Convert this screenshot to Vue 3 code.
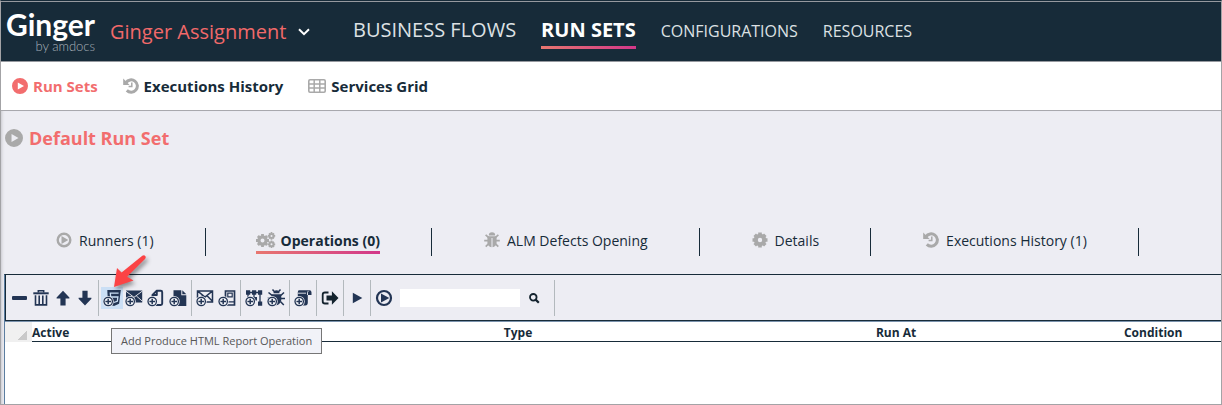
<script setup>
const mainMenu = [
  { label: 'BUSINESS FLOWS', size: 'large' },
  { label: 'RUN SETS', size: 'large', active: true },
  { label: 'CONFIGURATIONS', size: 'small' },
  { label: 'RESOURCES', size: 'small' },
]

const subMenu = [
  { label: 'Run Sets', icon: 'play-disc', active: true },
  { label: 'Executions History', icon: 'history' },
  { label: 'Services Grid', icon: 'grid' },
]

const tabs = [
  { label: 'Runners (1)', icon: 'play-ring' },
  { label: 'Operations (0)', icon: 'cogs', active: true },
  { label: 'ALM Defects Opening', icon: 'bug' },
  { label: 'Details', icon: 'cog' },
  { label: 'Executions History (1)', icon: 'history' },
]

const toolGroups = [
  [
    { icon: 'minus', label: 'Remove' },
    { icon: 'trash', label: 'Delete All' },
    { icon: 'up', label: 'Move Up' },
    { icon: 'down', label: 'Move Down' },
  ],
  [
    { icon: 'html', label: 'Add Produce HTML Report Operation', add: true, hover: true },
    { icon: 'mail', label: 'Add Send HTML Report Email Operation', add: true },
    { icon: 'file', label: 'Add Produce JSON Report Operation', add: true },
    { icon: 'file-solid', label: 'Add Produce Text Report Operation', add: true },
  ],
  [
    { icon: 'mail-line', label: 'Add Send Email Operation', add: true },
    { icon: 'phone', label: 'Add Send SMS Operation', add: true },
  ],
  [
    { icon: 'nodes', label: 'Add Update ALM Operation', add: true },
    { icon: 'tool-bug', label: 'Add ALM Defects Operation', add: true },
  ],
  [{ icon: 'scroll', label: 'Add Script Operation', add: true }],
  [{ icon: 'export', label: 'Export' }],
  [{ icon: 'play', label: 'Run Selected' }],
]
</script>

<template>
  <svg class="defs" aria-hidden="true">
    <symbol id="play-disc" viewBox="0 0 16 16">
      <path fill="currentColor" fill-rule="evenodd" d="M8 0a8 8 0 1 0 0 16A8 8 0 0 0 8 0zM5.8 4.4 12 8l-6.200 3.600z" />
    </symbol>
    <symbol id="play-ring" viewBox="0 0 16 16">
      <circle cx="8" cy="8" r="6.300" fill="none" stroke="currentColor" stroke-width="2.400" />
      <path fill="currentColor" d="M5.500 3.900 12.300 8l-6.800 4.100z" />
    </symbol>
    <symbol id="history" viewBox="0 0 16 16">
      <path fill="none" stroke="currentColor" stroke-width="3" d="M3 4.600A6.200 6.200 0 1 1 3.800 12.400" />
      <path fill="currentColor" d="M.2.600v6.400h6.400z" />
      <path fill="none" stroke="currentColor" stroke-width="1.500" d="M8.800 4.400v4.200H5.600" />
    </symbol>
    <symbol id="grid" viewBox="0 0 18 16">
      <rect x=".8" y="1.800" width="16.400" height="12.400" rx="1.200" fill="none" stroke="currentColor" stroke-width="1.600" />
      <path fill="none" stroke="currentColor" stroke-width="1.500" d="M1 6h16M1 10h16M6.200 2v12M11.800 2v12" />
    </symbol>
    <symbol id="cog" viewBox="0 0 16 16">
      <circle cx="8" cy="8" r="4.200" fill="none" stroke="currentColor" stroke-width="4" />
      <g stroke="currentColor" stroke-width="3.600">
        <path d="M8 .5v3M8 12.500v3M.5 8h3M12.500 8h3M2.700 2.700l2 2M11.300 11.300l2 2M13.300 2.700l-2 2M4.700 11.300l-2 2" />
      </g>
    </symbol>
    <symbol id="cogs" viewBox="0 0 20 16">
      <g fill="none" stroke="currentColor">
        <circle cx="6.500" cy="8.500" r="3.600" stroke-width="3.200" />
        <path stroke-width="2.800" d="M6.500 2v2.500M6.500 12.500V15M0 8.500h2.500M10.500 8.500H13M1.900 3.900l1.800 1.800M9.300 11.300l1.800 1.800M11.100 3.900 9.300 5.700M3.700 11.300l-1.800 1.800" />
        <circle cx="15.500" cy="3.900" r="2" stroke-width="2" />
        <circle cx="15.500" cy="12.300" r="2" stroke-width="2" />
        <path stroke-width="1.700" d="M15.500 0v1.500M15.500 6.300v1.500M11.800 3.900h1.500M17.700 3.900h1.500M13 1.400l1 1M17 5.400l1 1M18 1.400l-1 1M13.900 5.400l-1 1M15.500 8.400v1.500M15.500 14.700v1.300M11.800 12.300h1.500M17.700 12.300h1.500M13 9.800l1 1M17 13.800l1 1M18 9.800l-1 1M13.900 13.800l-1 1" />
      </g>
    </symbol>
    <symbol id="bug" viewBox="0 0 16 16">
      <path fill="currentColor" d="M4.800 3.500a3.200 3.200 0 0 1 6.400 0zM3.400 4.300h9.200v6.200c0 2.800-1.800 4.500-4.100 4.700V6h-1v9.200c-2.300-.2-4.100-1.900-4.100-4.700z" />
      <path fill="none" stroke="currentColor" stroke-width="1.700" d="M1.600 2.800l3.200 2.800M14.400 2.800l-3.200 2.800M.2 8.700h4M15.800 8.700h-4M1.700 14.600l3-3M14.300 14.600l-3-3" />
    </symbol>
    <symbol id="minus" viewBox="0 0 18 18"><rect x="2" y="7" width="15" height="4" rx="1" fill="currentColor" /></symbol>
    <symbol id="trash" viewBox="0 0 18 18">
      <path fill="none" stroke="currentColor" stroke-width="1.500" d="M6.300 3.500V1.800h5.400v1.700" />
      <path fill="currentColor" d="M1.300 3.300h15.400v2H1.300z" />
      <path fill="none" stroke="currentColor" stroke-width="1.600" d="M3.500 6.300v9.600h11V6.300M7.200 6.500v9M10.800 6.500v9" />
    </symbol>
    <symbol id="up" viewBox="0 0 18 18"><path fill="currentColor" d="M9 1.700 15.400 8.500v1h-3.800v7H6.400v-7H2.600v-1z" /></symbol>
    <symbol id="down" viewBox="0 0 18 18"><path fill="currentColor" d="M9 16.500 2.600 9.700v-1h3.800v-7h5.200v7h3.800v1z" /></symbol>
    <symbol id="html" viewBox="0 0 18 18">
      <path fill="currentColor" d="M4.300 1h13.500l-1.700 13.800L11 17l-6-2z" />
      <path fill="none" stroke="#cbdff5" stroke-width="1.300" d="M15.600 4.200H7.300l.4 3.800h7.200l-.6 4.300-3.600 1.200" />
    </symbol>
    <symbol id="mail" viewBox="0 0 18 18">
      <path fill="currentColor" d="M1 1.500h16.200v12H1z" />
      <path fill="none" stroke="#ededf3" stroke-width=".9" d="M1 2.300l8 6 8-6M11.300 6.900l5.700 5M6.700 6.900 1 11.900" />
    </symbol>
    <symbol id="file" viewBox="0 0 18 18">
      <path fill="none" stroke="currentColor" stroke-width="1.900" stroke-linejoin="round" d="M5.500 8V5.800l4-4h4.300q1.400 0 1.400 1.400v11.400q0 1.400-1.400 1.400H8M9.800 2v4H5.600" />
    </symbol>
    <symbol id="file-solid" viewBox="0 0 18 18">
      <path fill="currentColor" d="M4.500 1.200h7.800v5h5V17H4.500zM13.300 1.200l4 4h-4z" />
    </symbol>
    <symbol id="mail-line" viewBox="0 0 18 18">
      <path fill="none" stroke="currentColor" stroke-width="1.500" d="M1.500 9V2h15v11H9M1.700 2.200 9 8l7.300-5.800M11 6.800l5.500 5.400M6.800 6.500 2 11" />
    </symbol>
    <symbol id="phone" viewBox="0 0 18 18">
      <path fill="none" stroke="currentColor" stroke-width="1.700" d="M7.500 9V2h9v14H7.500" />
      <path fill="none" stroke="currentColor" stroke-width="1.200" d="M9.800 4.200h4.400v3.600H9.800zM9 12.800h7.500" />
    </symbol>
    <symbol id="nodes" viewBox="0 0 18 18">
      <path fill="none" stroke="currentColor" stroke-width="1.300" d="M3 3.500h12M9 3.500v7M15 3.500v11M3 3.500V9" />
      <path fill="currentColor" d="M1 1.300h4.200v4.400H1zM7 1.300h4.200v4.400H7zM13 1.300h4.200v4.400H13zM8.500 8h3.500v3.500H8.500zM13 12.500h4.200v4.300H13z" />
    </symbol>
    <symbol id="tool-bug" viewBox="0 0 18 18">
      <path fill="currentColor" d="M6.500 4.200a3 3 0 0 1 6 0zM5 5.200h9l.4 4c0 4-2 6.500-4.900 7-3-.5-4.900-3-4.900-7z" />
      <path fill="none" stroke="currentColor" stroke-width="1.500" d="M5.500.6l2 2.200M13.500.6l-2 2.200M1.500 3.500l4.200 3.300M17 3.500l-3.500 3.300M.8 9h4M18 9.500h-4M16.800 16l-3.400-3.600" />
    </symbol>
    <symbol id="scroll" viewBox="0 0 18 18">
      <path fill="currentColor" d="M5 1.300h10.500q2 0 2 2.200V6h-3.700v7.500q0 3-2.500 3H7l-.8-8H3.800V3.200Q3.800 1.300 5 1.300z" />
      <path fill="none" stroke="#ededf3" stroke-width=".9" d="M4 4.200h8M13.500 6V3.500q0-1.200 1-1.200" />
    </symbol>
    <symbol id="export" viewBox="0 0 18 18">
      <path fill="none" stroke="currentColor" stroke-width="1.800" d="M7.500 3.500H4q-2.300 0-2.300 2.300v6.400q0 2.300 2.300 2.300h3.500" />
      <path fill="currentColor" d="M5.500 6.500h5.400V2.300L17.500 9l-6.600 6.700v-4.200H5.500z" />
    </symbol>
    <symbol id="play" viewBox="0 0 18 18"><path fill="currentColor" d="M4.800 3.800 14.300 9l-9.500 5.200z" /></symbol>
    <symbol id="run-all" viewBox="0 0 18 18">
      <circle cx="9" cy="9" r="7" fill="none" stroke="currentColor" stroke-width="2.200" />
      <path fill="currentColor" d="M6 4.500 14.300 9 6 13.500z" />
    </symbol>
    <symbol id="search" viewBox="0 0 18 18">
      <circle cx="8.300" cy="8.300" r="3.300" fill="none" stroke="currentColor" stroke-width="1.800" />
      <path stroke="currentColor" stroke-width="2.200" d="m10.400 10.400 3.400 3.400" />
    </symbol>
    <symbol id="add" viewBox="0 0 18 18">
      <circle cx="5.200" cy="12.500" r="5.500" fill="#ededf3" />
      <circle cx="5.200" cy="12.500" r="4.200" fill="#f6f7fb" stroke="currentColor" stroke-width="1.300" />
      <path stroke="currentColor" stroke-width="1.500" d="M5.200 9.700v5.600M2.400 12.500H8" />
    </symbol>
  </svg>

  <div class="window">
    <header class="top">
      <div class="logo">
        <strong>Ginger</strong>
        <span>by amdocs</span>
      </div>
      <button class="solution" type="button">
        Ginger Assignment
        <svg class="chevron" viewBox="0 0 12 8" aria-hidden="true">
          <path d="M1 1.300 6 6.200l5-4.900" fill="none" stroke="currentColor" stroke-width="2" />
        </svg>
      </button>
      <nav class="main-menu" aria-label="Main">
        <a v-for="m in mainMenu" :key="m.label" href="#" :class="[m.size, { active: m.active }]">{{ m.label }}</a>
      </nav>
    </header>

    <nav class="sub-menu" aria-label="Run">
      <a v-for="s in subMenu" :key="s.label" href="#" :class="{ active: s.active }">
        <svg :class="{ wide: s.icon === 'grid' }" aria-hidden="true"><use :href="'#' + s.icon" /></svg>{{ s.label }}
      </a>
    </nav>

    <main>
      <h1>
        <svg aria-hidden="true"><use href="#play-disc" /></svg>Default Run Set
      </h1>

      <div class="tabs" role="tablist">
        <div v-for="t in tabs" :key="t.label" class="tab">
          <button type="button" role="tab" :aria-selected="!!t.active" :class="{ active: t.active }">
            <svg :class="{ wide: t.icon === 'cogs' }" aria-hidden="true"><use :href="'#' + t.icon" /></svg>
            <span>{{ t.label }}</span>
          </button>
        </div>
      </div>

      <section class="panel">
        <div class="toolbar" role="toolbar" aria-label="Operations">
          <div v-for="(g, i) in toolGroups" :key="i" class="group">
            <button v-for="b in g" :key="b.icon" type="button" :aria-label="b.label" :class="['tool', b.icon, { hover: b.hover }]">
              <svg aria-hidden="true">
                <use :href="'#' + b.icon" />
                <use v-if="b.add" href="#add" />
              </svg>
              <span v-if="b.hover" class="tip" role="tooltip">{{ b.label }}</span>
              <svg v-if="b.hover" class="pointer" viewBox="0 0 40 40" aria-hidden="true">
                <path d="M3 35 6 16l4.600 4.600L31.300 3.800q1.800-1.200 3 .2 1 1.500-.3 3L16.200 24.800l6.300 3.700z" />
              </svg>
            </button>
          </div>
          <div class="group last">
            <button type="button" class="tool" aria-label="Run All">
              <svg aria-hidden="true"><use href="#run-all" /></svg>
            </button>
            <input type="text" aria-label="Search operations" />
            <button type="button" class="tool dark" aria-label="Search">
              <svg aria-hidden="true"><use href="#search" /></svg>
            </button>
          </div>
        </div>

        <table>
          <thead>
            <tr>
              <td class="corner"></td>
              <th class="c-active" scope="col">Active</th>
              <th class="c-type" scope="col">Type</th>
              <th class="c-run" scope="col">Run At</th>
              <th scope="col">Condition</th>
            </tr>
          </thead>
        </table>
      </section>
    </main>
  </div>
</template>

<style>
body {
  background: #fff;
}
</style>

<style scoped>
* {
  box-sizing: border-box;
}
.defs {
  position: absolute;
  width: 0;
  height: 0;
}
.window {
  display: flex;
  flex-direction: column;
  min-height: 100vh;
  font-family: 'Open Sans', 'Noto Sans', sans-serif;
  color: #172b39;
  border: 1px solid #a3a3a6;
  border-top-color: #172b39;
}
button {
  font: inherit;
  color: inherit;
  background: none;
  border: 0;
  padding: 0;
}
a {
  color: inherit;
  text-decoration: none;
}
.top {
  display: flex;
  align-items: center;
  height: 61px;
  background: #172b39;
  border-top: 1px solid #96999f;
  border-bottom: 1px solid #96999f;
  white-space: nowrap;
}
.logo {
  width: 90px;
  margin-left: 4px;
  display: flex;
  flex-direction: column;
  align-items: flex-end;
  font-family: Lato, sans-serif;
  color: #fff;
}
.logo strong {
  font-size: 30px;
  line-height: 28px;
  font-weight: 700;
}
.logo span {
  font-size: 13px;
  line-height: 16px;
  font-weight: 300;
  color: #aab2b9;
}
.solution {
  display: flex;
  align-items: center;
  gap: 12px;
  margin-left: 15px;
  width: 243px;
  font-size: 20px;
  line-height: 28px;
  color: #f1696a;
}
.chevron {
  width: 12px;
  height: 8px;
  color: #fff;
}
.main-menu {
  display: flex;
  align-items: baseline;
  gap: 25px;
  color: #dde1e4;
}
.main-menu a {
  line-height: 30px;
  padding: 2px 0 1px;
  border-bottom: 3px solid transparent;
}
.large {
  font-size: 20px;
}
.small {
  font-size: 16px;
}
.main-menu .active {
  font-weight: 700;
  color: #fff;
  border-image: linear-gradient(90deg, #e8776f, #d2378a) 1;
}
.sub-menu {
  display: flex;
  align-items: center;
  gap: 25px;
  height: 49px;
  padding-left: 11px;
  border-bottom: 1px solid #a8a8ad;
  background: #fff;
  font-size: 15px;
  line-height: 20px;
  font-weight: 700;
}
.sub-menu a {
  display: flex;
  align-items: center;
  gap: 5px;
}
.sub-menu svg,
.tabs svg {
  width: 16px;
  height: 16px;
  color: #a9a9a9;
}
.sub-menu .wide {
  width: 18px;
}
.sub-menu .active,
.sub-menu .active svg {
  color: #f26d6e;
}
main {
  flex: 1;
  display: flex;
  flex-direction: column;
  background: #ededf3;
  padding-left: 3px;
  box-shadow: inset 3px 0 3px -2px #c8c8ce;
}
h1 {
  display: flex;
  align-items: center;
  gap: 5px;
  margin: 14px 0 77px;
  padding-left: 1px;
  font-size: 18px;
  line-height: 26px;
  font-weight: 700;
  color: #f26d6e;
}
h1 svg {
  width: 18px;
  height: 18px;
  margin-right: 1px;
  color: #a9a9a9;
}
.tabs {
  display: flex;
  height: 28px;
  font-size: 14px;
  white-space: nowrap;
}
.tab {
  padding: 0 51px 0 50px;
  border-right: 1px solid #172b39;
}
.tab button {
  display: flex;
  align-items: center;
  height: 26px;
  padding-top: 1px;
  border-bottom: 3px solid transparent;
}
.tab svg {
  margin: 0 7px 0 2px;
}
.tab .wide {
  width: 20px;
  margin: 0 5px 0 0;
}
.tab .active {
  font-weight: 700;
  border-image: linear-gradient(90deg, #e8776f, #d2378a) 1;
}
.panel {
  flex: 1;
  margin-top: 18px;
  border: 1px solid #172b39;
  border-right: 0;
  border-bottom: 0;
  border-left-color: #5b7da0;
  background: #fff;
}
.toolbar {
  display: flex;
  align-items: center;
  height: 47px;
  padding: 0 3px;
  background: #ededf3;
  border-bottom: 1px solid #7b93ad;
  box-shadow: inset 0 -1px #172b39, inset 1px 0 #172b39;
  color: #233554;
}
.group {
  display: flex;
  align-items: center;
  height: 36px;
  padding-right: 2px;
  margin-right: 2px;
  border-right: 1px solid #b3b9bd;
}
.last {
  padding-right: 9px;
}
.tool {
  position: relative;
  display: grid;
  place-items: center;
  width: 22px;
  height: 22px;
}
.tool svg {
  width: 18px;
  height: 18px;
}
.tool.hover {
  background: #cbdff5;
}
.export,
.dark {
  color: #14232e;
}
.tip {
  position: absolute;
  z-index: 2;
  top: 41px;
  left: 10px;
  padding: 0 9px;
  border: 1px solid #767676;
  background: #f1f2f8;
  color: #575757;
  font-size: 11px;
  line-height: 24px;
  white-space: nowrap;
}
.tool .pointer {
  position: absolute;
  z-index: 3;
  left: 10px;
  bottom: 17px;
  width: 40px;
  height: 40px;
  fill: #fb4345;
  filter: drop-shadow(2px 3px 2px rgba(0, 0, 0, 0.4));
}
input {
  width: 120px;
  height: 18px;
  margin: 0 3px 0 5px;
  padding: 0 4px;
  border: 0;
  background: #fff;
  font: inherit;
  font-size: 12px;
}
table {
  width: 100%;
  table-layout: fixed;
  border-collapse: collapse;
  font-size: 12px;
  line-height: 17px;
}
th {
  padding: 2px 0 0;
  text-align: left;
  font-weight: 700;
  border-bottom: 1px solid #172b39;
}
.corner {
  width: 27px;
  padding: 0;
  background: linear-gradient(135deg, transparent 50%, #c9c9c9 50%) 12px 8px / 10px 10px no-repeat, #f0f0f0;
}
.c-active {
  width: 38.8%;
}
.c-type {
  width: 30.6%;
}
.c-run {
  width: 20.4%;
}
</style>
